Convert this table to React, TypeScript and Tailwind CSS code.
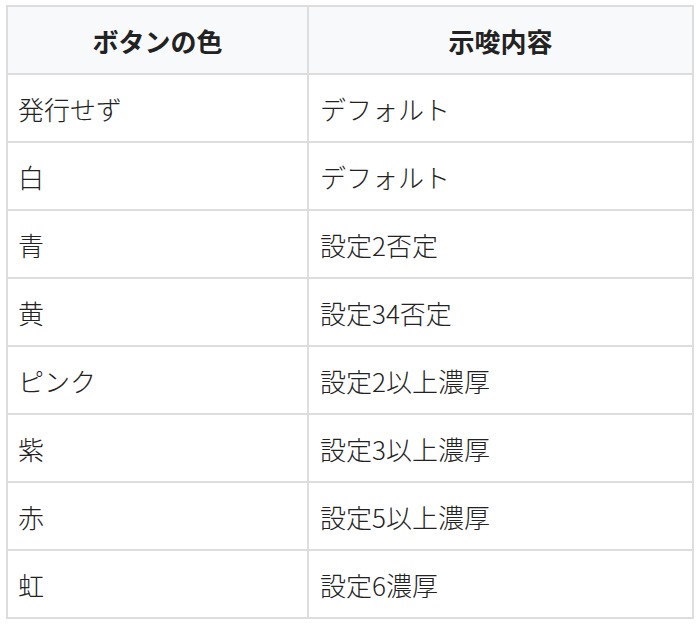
import React from "react";

const rows: [string, string][] = [
  ["発行せず", "デフォルト"],
  ["白", "デフォルト"],
  ["青", "設定2否定"],
  ["黄", "設定34否定"],
  ["ピンク", "設定2以上濃厚"],
  ["紫", "設定3以上濃厚"],
  ["赤", "設定5以上濃厚"],
  ["虹", "設定6濃厚"],
];

export default function App() {
  return (
    <div className="bg-white w-[700px] h-[625px] pt-[5px] pl-[6px]" style={{ fontFamily: '"Noto Sans CJK JP", "Noto Sans", sans-serif' }}>
      <table className="border-collapse w-[688px] text-[#222222] text-[26px]">
        <thead>
          <tr className="h-[68px] bg-[#f8f9fa]">
            <th className="border-2 border-[#dddddd] w-[301px] font-bold text-center px-[10px]">ボタンの色</th>
            <th className="border-2 border-[#dddddd] font-bold text-center px-[10px]">示唆内容</th>
          </tr>
        </thead>
        <tbody>
          {rows.map(([a, b], i) => (
            <tr key={i} className="h-[68px]">
              <td className="border-2 border-[#dddddd] px-[10px] text-left font-light">{a}</td>
              <td className="border-2 border-[#dddddd] px-[11px] text-left font-light">{b}</td>
            </tr>
          ))}
        </tbody>
      </table>
    </div>
  );
}
